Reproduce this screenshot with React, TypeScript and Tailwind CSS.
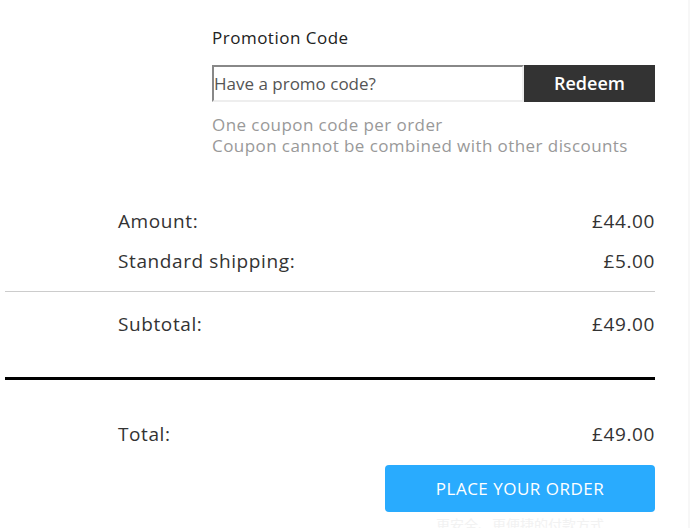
import React from "react";

const rows = [
    { label: "Amount:", value: "£44.00" },
    { label: "Standard shipping:", value: "£5.00" },
];

const App: React.FC = () => {
    return (
        <div className="w-[690px] h-[528px] bg-white flex overflow-hidden font-['Open_Sans',sans-serif] text-[#333]">
            <div className="w-[688px] pl-[5px]">
                <div className="w-[650px]">
                    {/* promo code */}
                    <div className="ml-[207px] pt-[26px]">
                        <p className="text-[17px] leading-[24px] tracking-[0.5px] text-[#222]">Promotion Code</p>
                        <div className="flex mt-[15px] h-[37px]">
                            <input
                                className="w-[312px] h-full border-2 border-t-[#888] border-l-[#888] border-b-[#eee] border-r-[#eee] px-0 text-[17px] text-[#333] placeholder:text-[#555] outline-none"
                                placeholder="Have a promo code?"
                            />
                            <button className="flex-1 h-full bg-[#333] text-white text-[18px] font-semibold">Redeem</button>
                        </div>
                        <div className="mt-[12px] text-[17px] leading-[21px] tracking-[0.43px] text-[#999]">
                            <p>One coupon code per order</p>
                            <p>Coupon cannot be combined with other discounts</p>
                        </div>
                    </div>

                    {/* totals */}
                    <div className="mt-[45px]">
                        {rows.map((r) => (
                            <div key={r.label} className="h-[40px] pl-[113px] flex items-center justify-between text-[19px] tracking-[0.6px]">
                                <span>{r.label}</span>
                                <span>{r.value}</span>
                            </div>
                        ))}
                        <div className="mt-[10px] h-px bg-[#ccc]" />
                        <div className="mt-[12px] h-[40px] pl-[113px] flex items-center justify-between text-[19px] tracking-[0.6px]">
                            <span>Subtotal:</span>
                            <span>£49.00</span>
                        </div>
                        <div className="mt-[33px] h-[3px] bg-black" />
                        <div className="mt-[34px] h-[40px] pl-[113px] flex items-center justify-between text-[19px] tracking-[0.6px]">
                            <span>Total:</span>
                            <span>£49.00</span>
                        </div>
                        <div className="mt-[11px] flex flex-col items-end">
                            <button className="w-[270px] h-[47px] rounded-[4px] bg-[#29abfe] text-white text-[17px] tracking-[0.5px]">
                                PLACE YOUR ORDER
                            </button>
                            <p className="w-[270px] text-center mt-[3px] text-[14px] leading-[18px] text-[#f2f2f2] font-['Noto_Sans_CJK_SC',sans-serif]">
                                更安全、更便捷的付款方式
                            </p>
                        </div>
                    </div>
                </div>
            </div>
            <div className="flex-1 bg-[#f7f7f7]" />
        </div>
    );
};

export default App;
